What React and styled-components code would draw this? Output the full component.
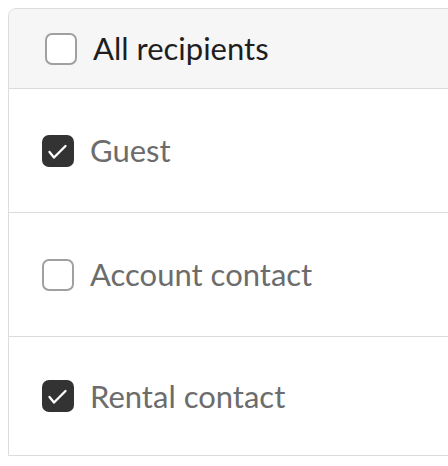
import React, { useState } from 'react';
import styled, { createGlobalStyle } from 'styled-components';

const GlobalStyle = createGlobalStyle`
  html, body {
    margin: 0;
    padding: 0;
    overflow: hidden;
    background: #ffffff;
  }
  body {
    font-family: Lato, "Liberation Sans", sans-serif;
  }
`;

// Styling...
const Page = styled.div`
  padding: 8px 0 0 8px;
`;

const Table = styled.div`
  width: 520px;
  border: 1px solid #dcdcdc;
  border-top-left-radius: 8px;
  overflow: hidden;
`;

const HeaderRow = styled.div`
  display: flex;
  align-items: center;
  gap: 16px;
  height: 80px;
  box-sizing: border-box;
  padding-left: 36px;
  background-color: #f6f6f6;
  border-bottom: 1px solid #dcdcdc;
`;

const Row = styled.div`
  display: flex;
  align-items: center;
  gap: 16px;
  height: 124px;
  box-sizing: border-box;
  padding-left: 33px;
  border-bottom: 1px solid #dcdcdc;

  &:last-child {
    height: 118px;
    border-bottom: none;
  }
`;

const Label = styled.span`
  font-size: 31px;
  color: ${({ $strong }) => ($strong ? '#1e1e1e' : '#6c6c6c')};
  line-height: 1;
`;

const Box = styled.span`
  display: flex;
  align-items: center;
  justify-content: center;
  flex-shrink: 0;
  width: 32px;
  height: 32px;
  box-sizing: border-box;
  border-radius: 7px;
  cursor: pointer;
  background-color: ${({ $checked }) => ($checked ? '#333333' : '#ffffff')};
  border: ${({ $checked }) => ($checked ? 'none' : '2px solid #a0a0a0')};
`;

function Checkbox({ checked, onClick }) {
  return (
    <Box $checked={checked} onClick={onClick}>
      {checked && (
        <svg width="32" height="32" viewBox="0 0 32 32" fill="none">
          <path
            d="M7.5 17L12 22.5L23.5 11"
            stroke="#ffffff"
            strokeWidth="2.3"
            strokeLinecap="round"
            strokeLinejoin="round"
          />
        </svg>
      )}
    </Box>
  );
}

const recipients = [
  { id: 'guest', name: 'Guest' },
  { id: 'account', name: 'Account contact' },
  { id: 'rental', name: 'Rental contact' },
];

export default function App() {
  const [selected, setSelected] = useState({ guest: true, account: false, rental: true });
  const allChecked = recipients.every((r) => selected[r.id]);

  const toggle = (id) => setSelected((s) => ({ ...s, [id]: !s[id] }));
  const toggleAll = () => {
    const next = {};
    recipients.forEach((r) => { next[r.id] = !allChecked; });
    setSelected(next);
  };

  return (
    <Page>
      <GlobalStyle />
      <Table>
        <HeaderRow>
          <Checkbox checked={allChecked} onClick={toggleAll} />
          <Label $strong>All recipients</Label>
        </HeaderRow>
        {recipients.map((r) => (
          <Row key={r.id}>
            <Checkbox checked={selected[r.id]} onClick={() => toggle(r.id)} />
            <Label>{r.name}</Label>
          </Row>
        ))}
      </Table>
    </Page>
  );
}
